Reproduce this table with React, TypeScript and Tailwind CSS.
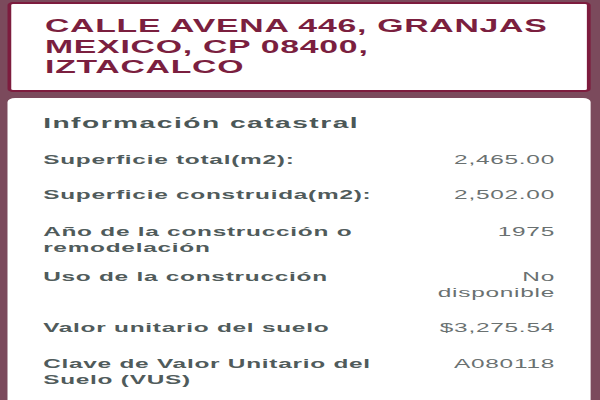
const ROWS: { label: string; value: string; mt: string }[] = [
  { label: 'Superficie total(m2):', value: '2,465.00', mt: 'mt-[20px]' },
  { label: 'Superficie construida(m2):', value: '2,502.00', mt: 'mt-[19px]' },
  { label: 'Año de la construcción o remodelación', value: '1975', mt: 'mt-[21px]' },
  { label: 'Uso de la construcción', value: 'No disponible', mt: 'mt-[13px]' },
  { label: 'Valor unitario del suelo', value: '$3,275.54', mt: 'mt-[19px]' },
  { label: 'Clave de Valor Unitario del Suelo (VUS)', value: 'A080118', mt: 'mt-[20px]' },
]

export default function App() {
  return (
    <div className="h-[400px] w-[600px] overflow-hidden bg-[#7b4a5c] font-['Liberation_Sans',Arial,sans-serif]">
      {/* the source is a narrow phone view stretched sideways, so lay out at 320px and widen */}
      <div className="w-[320px] origin-top-left scale-x-[1.875] pt-[2px] pl-[4px] pr-[5px]">
        <div className="rounded-[3px] border-2 border-[#7d1c3e] bg-white px-[18px] pt-[12px] pb-[12px]">
          <h1 className="text-[18px] leading-[20.5px] font-bold tracking-[0.4px] text-[#7b1f3f]">
            CALLE AVENA 446, GRANJAS MEXICO, CP 08400, IZTACALCO
          </h1>
        </div>

        <div className="mt-[6px] rounded-t-[4px] bg-white px-[19px] pt-[16px] pb-8">
          <h2 className="text-[15px] leading-[18px] font-bold tracking-[0.8px] text-[#4b5757]">Información catastral</h2>
          {ROWS.map((r) => (
            <div key={r.label} className={`flex justify-between ${r.mt}`}>
              <span className="w-[190px] text-[13px] leading-[16px] font-bold tracking-[0.4px] text-[#505b5b]">{r.label}</span>
              <span className="w-[72px] text-right text-[13px] leading-[16px] tracking-[0.4px] text-[#6a7171]">{r.value}</span>
            </div>
          ))}
        </div>
      </div>
    </div>
  )
}
